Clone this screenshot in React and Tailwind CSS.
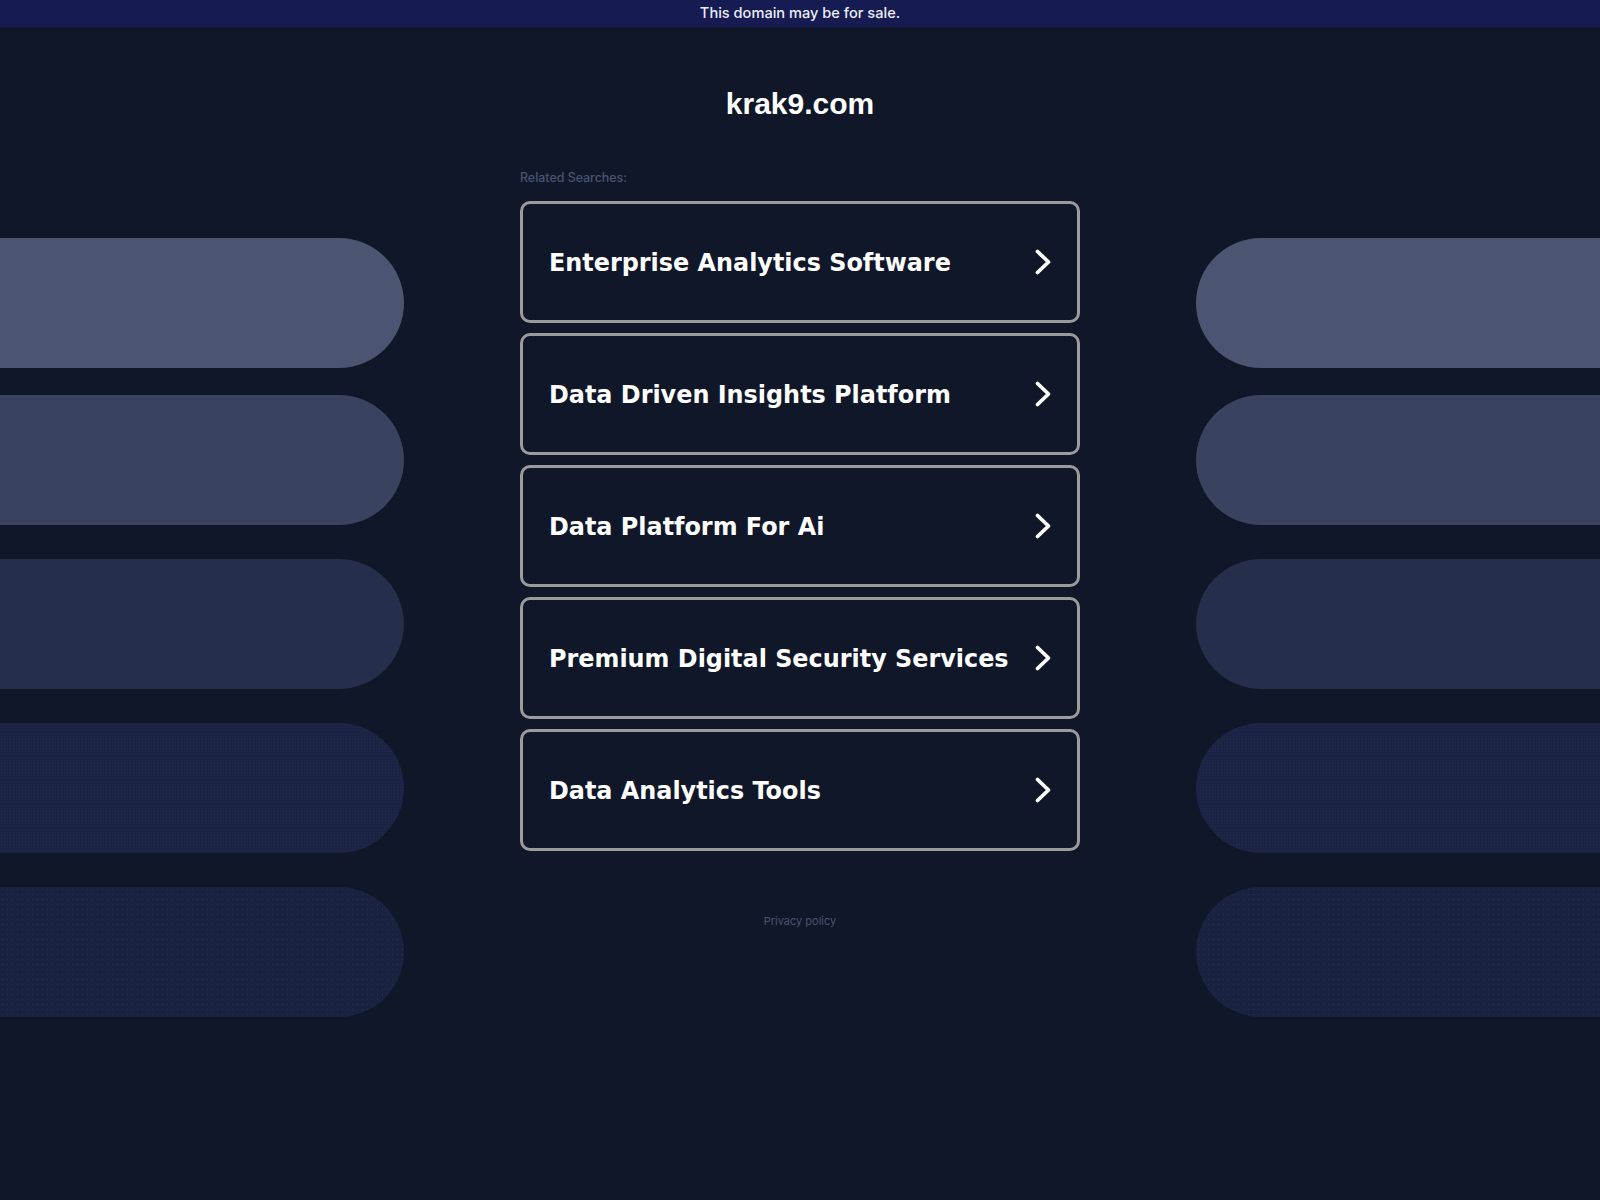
import React from "react";

const items = [
  "Enterprise Analytics Software",
  "Data Driven Insights Platform",
  "Data Platform For Ai",
  "Premium Digital Security Services",
  "Data Analytics Tools",
];

function Chevron() {
  return (
    <svg width="20" height="28" viewBox="0 0 20 28" fill="none" className="shrink-0">
      <polyline
        points="4.5,3.5 15.5,14 4.5,24.5"
        stroke="#ffffff"
        strokeWidth="3.8"
        strokeLinecap="round"
        strokeLinejoin="round"
      />
    </svg>
  );
}

function Pills({ side }) {
  const r = side === "left" ? "rounded-r-full" : "rounded-l-full";
  return (
    <div className="w-[404px] shrink-0 flex flex-col pt-[211px]">
      <div className={`h-[130px] bg-[#4b5572] ${r}`} />
      <div className={`h-[130px] mt-[27px] bg-[#39425f] ${r}`} />
      <div className={`h-[130px] mt-[34px] bg-[#252e4b] ${r}`} />
      <div
        className={`h-[130px] mt-[34px] bg-[#1b2444] bg-[radial-gradient(#212b4c_0.7px,transparent_0.8px)] bg-[length:3px_3px] ${r}`}
      />
      <div
        className={`h-[130px] mt-[34px] bg-[#19223f] bg-[radial-gradient(#253052_0.9px,transparent_1px)] bg-[length:5px_5px] ${r}`}
      />
    </div>
  );
}

export default function App() {
  return (
    <div className="min-h-[1200px] w-full bg-[#101729]">
      <div className="h-[27px] bg-[#161b51] flex items-center justify-center">
        <span className="text-[14.6px] font-medium text-[#eceef6] font-['Inter','Noto_Sans',sans-serif] leading-none">
          This domain may be for sale.
        </span>
      </div>
      <div className="flex">
        <Pills side="left" />
        <div className="flex-1 flex flex-col items-center">
          <h1 className="mt-[60px] text-[30px] leading-[34px] font-bold text-white font-['Liberation_Sans',Arial,sans-serif]">
            krak9.com
          </h1>
          <div className="w-[560px] mt-[49px]">
            <div className="text-[12.4px] leading-[16px] font-medium text-[#4a5373] font-['Inter','Noto_Sans',sans-serif]">
              Related Searches:
            </div>
            <div className="mt-[15px] flex flex-col gap-[10px]">
              {items.map((t) => (
                <div
                  key={t}
                  className="h-[122px] border-[3px] border-[#9b9b9b] rounded-[10px] flex items-center justify-between pl-[26px] pr-[24px]"
                >
                  <span className="pt-[4px] text-[23.9px] font-bold text-white font-['DejaVu_Sans',Verdana,sans-serif] leading-none">
                    {t}
                  </span>
                  <Chevron />
                </div>
              ))}
            </div>
          </div>
          <div className="mt-[63px] text-[11px] leading-[14px] text-[#4a5373] font-['Inter','Noto_Sans',sans-serif]">
            Privacy policy
          </div>
        </div>
        <Pills side="right" />
      </div>
    </div>
  );
}
